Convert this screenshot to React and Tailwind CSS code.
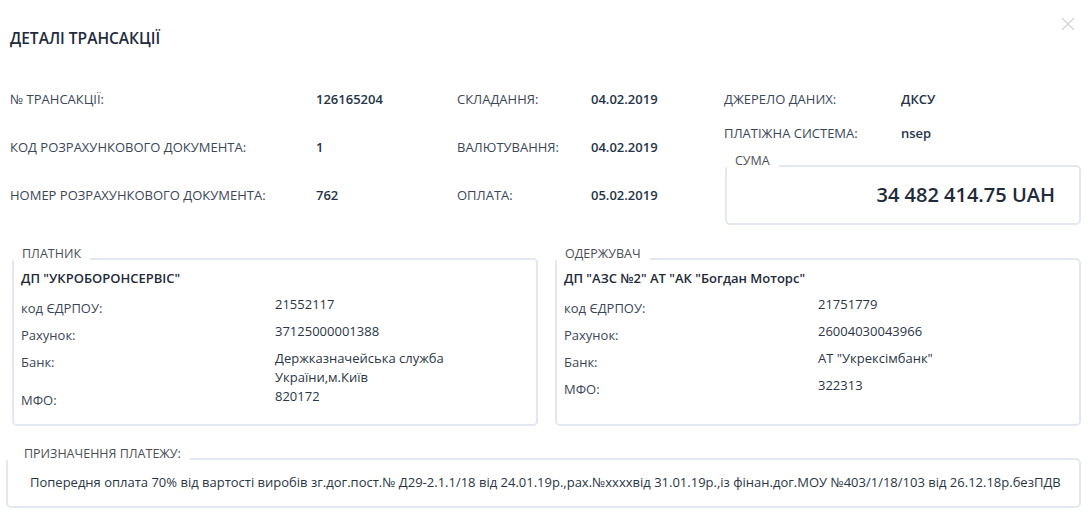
import React from 'react';

const topLeft = [
  ["№ ТРАНСАКЦІЇ:", "126165204"],
  ["КОД РОЗРАХУНКОВОГО ДОКУМЕНТА:", "1"],
  ["НОМЕР РОЗРАХУНКОВОГО ДОКУМЕНТА:", "762"],
];

const topMid = [
  ["СКЛАДАННЯ:", "04.02.2019"],
  ["ВАЛЮТУВАННЯ:", "04.02.2019"],
  ["ОПЛАТА:", "05.02.2019"],
];

const payer = {
  title: "ПЛАТНИК",
  name: 'ДП "УКРОБОРОНСЕРВІС"',
  rows: [
    ["код ЄДРПОУ:", "21552117"],
    ["Рахунок:", "37125000001388"],
    ["Банк:", "Держказначейська служба України,м.Київ"],
    ["МФО:", "820172"],
  ],
};

const receiver = {
  title: "ОДЕРЖУВАЧ",
  name: 'ДП "АЗС №2" АТ "АК "Богдан Моторс"',
  rows: [
    ["код ЄДРПОУ:", "21751779"],
    ["Рахунок:", "26004030043966"],
    ["Банк:", 'АТ "Укрексімбанк"'],
    ["МФО:", "322313"],
  ],
};

// fieldset with the legend sitting on the top border (legend covers the corner)
const Box = ({ title, legendPad = "pl-[8px]", className, children }) => (
  <fieldset className="border-2 border-[#e2e7f2] rounded-[5px] min-w-0">
    <legend className={`${legendPad} pr-[9px] pb-[10px] text-[12.5px] leading-[12px] text-[#4b4f56]`}>{title}</legend>
    <div className={className}>{children}</div>
  </fieldset>
);

const PartyBox = ({ data }) => (
  <Box title={data.title} className="px-[7px] pb-[10px]">
    <div className="-mt-[1px] text-[13px] leading-[18px] font-semibold text-[#1f2b3a]">{data.name}</div>
    <div className="mt-[8px]">
      {data.rows.map(([label, value]) => (
        <div key={label} className="grid grid-cols-2 min-h-[27px]">
          <div className="pt-[4px] text-[13px] leading-[19px] text-[#3b4757]">{label}</div>
          <div className="text-[13px] leading-[19px] text-[#2a3646] pr-[60px]">{value}</div>
        </div>
      ))}
    </div>
  </Box>
);

export default function App() {
  return (
    <div className="w-[1091px] h-[519px] bg-white overflow-hidden text-[#253447]" style={{ fontFamily: '"Open Sans", "Noto Sans", sans-serif' }}>
      <div className="flex justify-between items-start pl-[10px] pr-[15px] pt-[16px]">
        <h1 className="mt-[12px] text-[15.5px] leading-[20px] font-semibold text-[#1e2b3c]">ДЕТАЛІ ТРАНСАКЦІЇ</h1>
        <button className="w-[16px] h-[16px] text-[#d4d4d4]">
          <svg viewBox="0 0 16 16" width="16" height="16" fill="none" stroke="currentColor" strokeWidth="1.4">
            <path d="M2 2L14 14M14 2L2 14" />
          </svg>
        </button>
      </div>

      <div className="flex pl-[10px] pr-[10px] mt-[42px] text-[13px] leading-[18px]">
        <div className="w-[447px]">
          {topLeft.map(([l, v]) => (
            <div key={l} className="flex h-[48px]">
              <div className="w-[306px] text-[#3b4757]">{l}</div>
              <div className="font-semibold">{v}</div>
            </div>
          ))}
        </div>
        <div className="w-[267px]">
          {topMid.map(([l, v]) => (
            <div key={l} className="flex h-[48px]">
              <div className="w-[134px] text-[#3b4757]">{l}</div>
              <div className="font-semibold">{v}</div>
            </div>
          ))}
        </div>
        <div className="flex-1 pl-[1px]">
          <div className="flex h-[34px]">
            <div className="w-[177px] -ml-[1px] text-[#3b4757]">ДЖЕРЕЛО ДАНИХ:</div>
            <div className="font-semibold">ДКСУ</div>
          </div>
          <div className="flex h-[31px]">
            <div className="w-[177px] -ml-[1px] text-[#3b4757]">ПЛАТІЖНА СИСТЕМА:</div>
            <div className="font-semibold">nsep</div>
          </div>
          <Box title="СУМА" className="pr-[24px] pt-[4px] pb-[14px]">
            <div className="text-right text-[20px] leading-[28px] font-semibold text-[#1f2b3a]">34 482 414.75 UAH</div>
          </Box>
        </div>
      </div>

      <div className="grid grid-cols-2 gap-[17px] pl-[12px] pr-[10px] mt-[14px]">
        <PartyBox data={payer} />
        <PartyBox data={receiver} />
      </div>

      <div className="pl-[6px] pr-[10px] mt-[22px]">
        <Box title="ПРИЗНАЧЕННЯ ПЛАТЕЖУ:" legendPad="pl-[16px]" className="pl-[22px] pt-[3px] pb-[15px]">
          <div className="text-[13px] leading-[18px] text-[#2a3646] whitespace-nowrap">
            Попередня оплата 70% від вартості виробів зг.дог.пост.№ Д29-2.1.1/18 від 24.01.19р.,рах.№xxxxвід 31.01.19р.,із фінан.дог.МОУ №403/1/18/103 від 26.12.18р.безПДВ
          </div>
        </Box>
      </div>
    </div>
  );
}
